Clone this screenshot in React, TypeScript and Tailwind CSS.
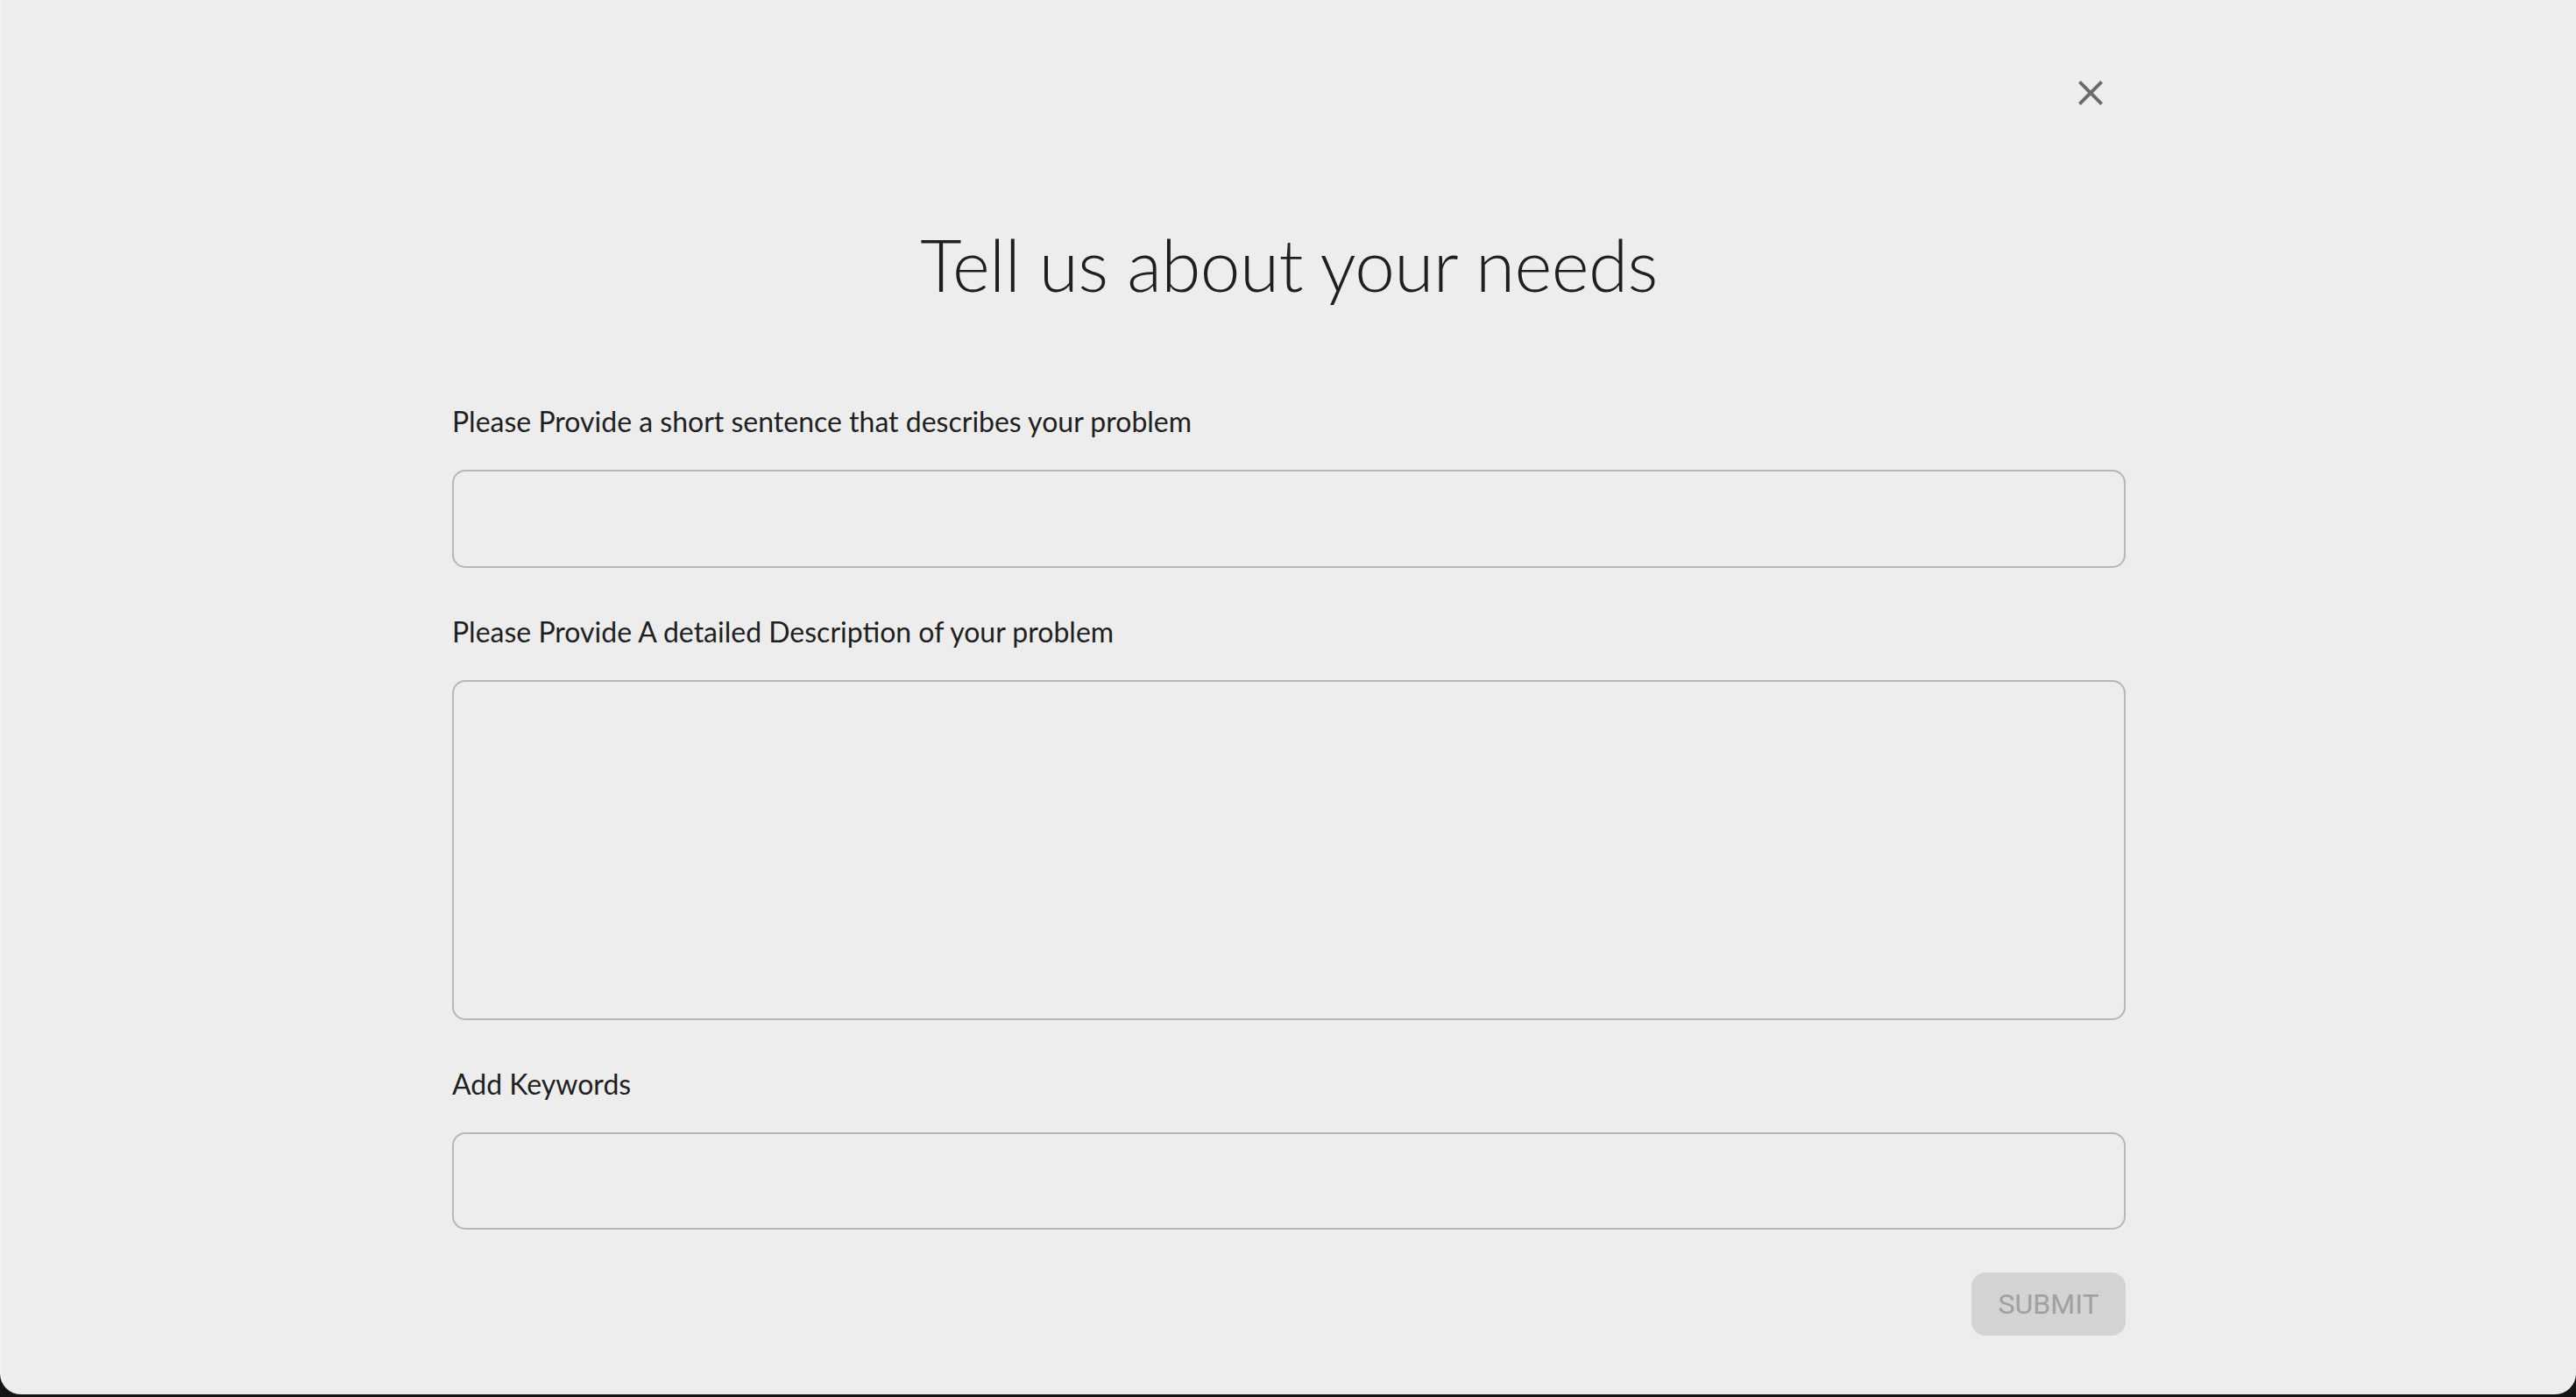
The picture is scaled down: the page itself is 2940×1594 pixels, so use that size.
import React from "react";

function CloseIcon() {
  return (
    <svg viewBox="0 0 24 24" width="48" height="48" fill="#6b6b6b" aria-hidden="true">
      <path d="M19 6.41 17.59 5 12 10.59 6.41 5 5 6.41 10.59 12 5 17.59 6.41 19 12 13.41 17.59 19 19 17.59 13.41 12z" />
    </svg>
  );
}

function Field({ label, inputClass, multiline }: { label: string; inputClass: string; multiline?: boolean }) {
  return (
    <div className="flex flex-col">
      <label className="h-[40px] text-[32px] leading-[40px] text-[#1f1f1f]" style={{ fontFamily: "Lato, 'Noto Sans', sans-serif" }}>
        {label}
      </label>
      <div className="mt-[35px]">
        {multiline ? (
          <textarea className={`block w-full resize-none rounded-[15px] border-2 border-[#b6b6b6] bg-transparent outline-none ${inputClass}`} />
        ) : (
          <input className={`block w-full rounded-[15px] border-2 border-[#b6b6b6] bg-transparent outline-none ${inputClass}`} />
        )}
      </div>
    </div>
  );
}

export default function App() {
  return (
    <div className="h-[1594px] w-full overflow-hidden bg-[#151515]">
      <div className="h-[1591px] w-full rounded-b-[24px] border-l-2 border-[#f3f3f3] bg-[#ededed] pt-[66px]">
        <div className="mx-auto flex w-[1910px] flex-col">
          <div className="flex justify-end">
            <button className="flex h-[80px] w-[80px] items-center justify-center rounded-full">
              <CloseIcon />
            </button>
          </div>
          <h1
            className="mt-[106px] text-center text-[82px] font-light leading-[98px] tracking-[-0.6px] text-[#1f1f1f]"
            style={{ fontFamily: "Lato, 'Noto Sans', sans-serif" }}
          >
            Tell us about your needs
          </h1>
          <div className="mt-[111px] flex flex-col gap-[53px]">
            <Field label="Please Provide a short sentence that describes your problem" inputClass="h-[112px]" />
            <Field label="Please Provide A detailed Description of your problem" inputClass="h-[388px]" multiline />
            <Field label="Add Keywords" inputClass="h-[111px]" />
          </div>
          <div className="mt-[49px] flex justify-end">
            <button
              disabled
              className="flex h-[72px] w-[176px] items-center justify-center rounded-[16px] bg-[#d3d3d3] text-[32px] text-[#a0a0a0]"
              style={{ fontFamily: "Roboto, 'Liberation Sans', sans-serif" }}
            >
              SUBMIT
            </button>
          </div>
        </div>
      </div>
    </div>
  );
}
